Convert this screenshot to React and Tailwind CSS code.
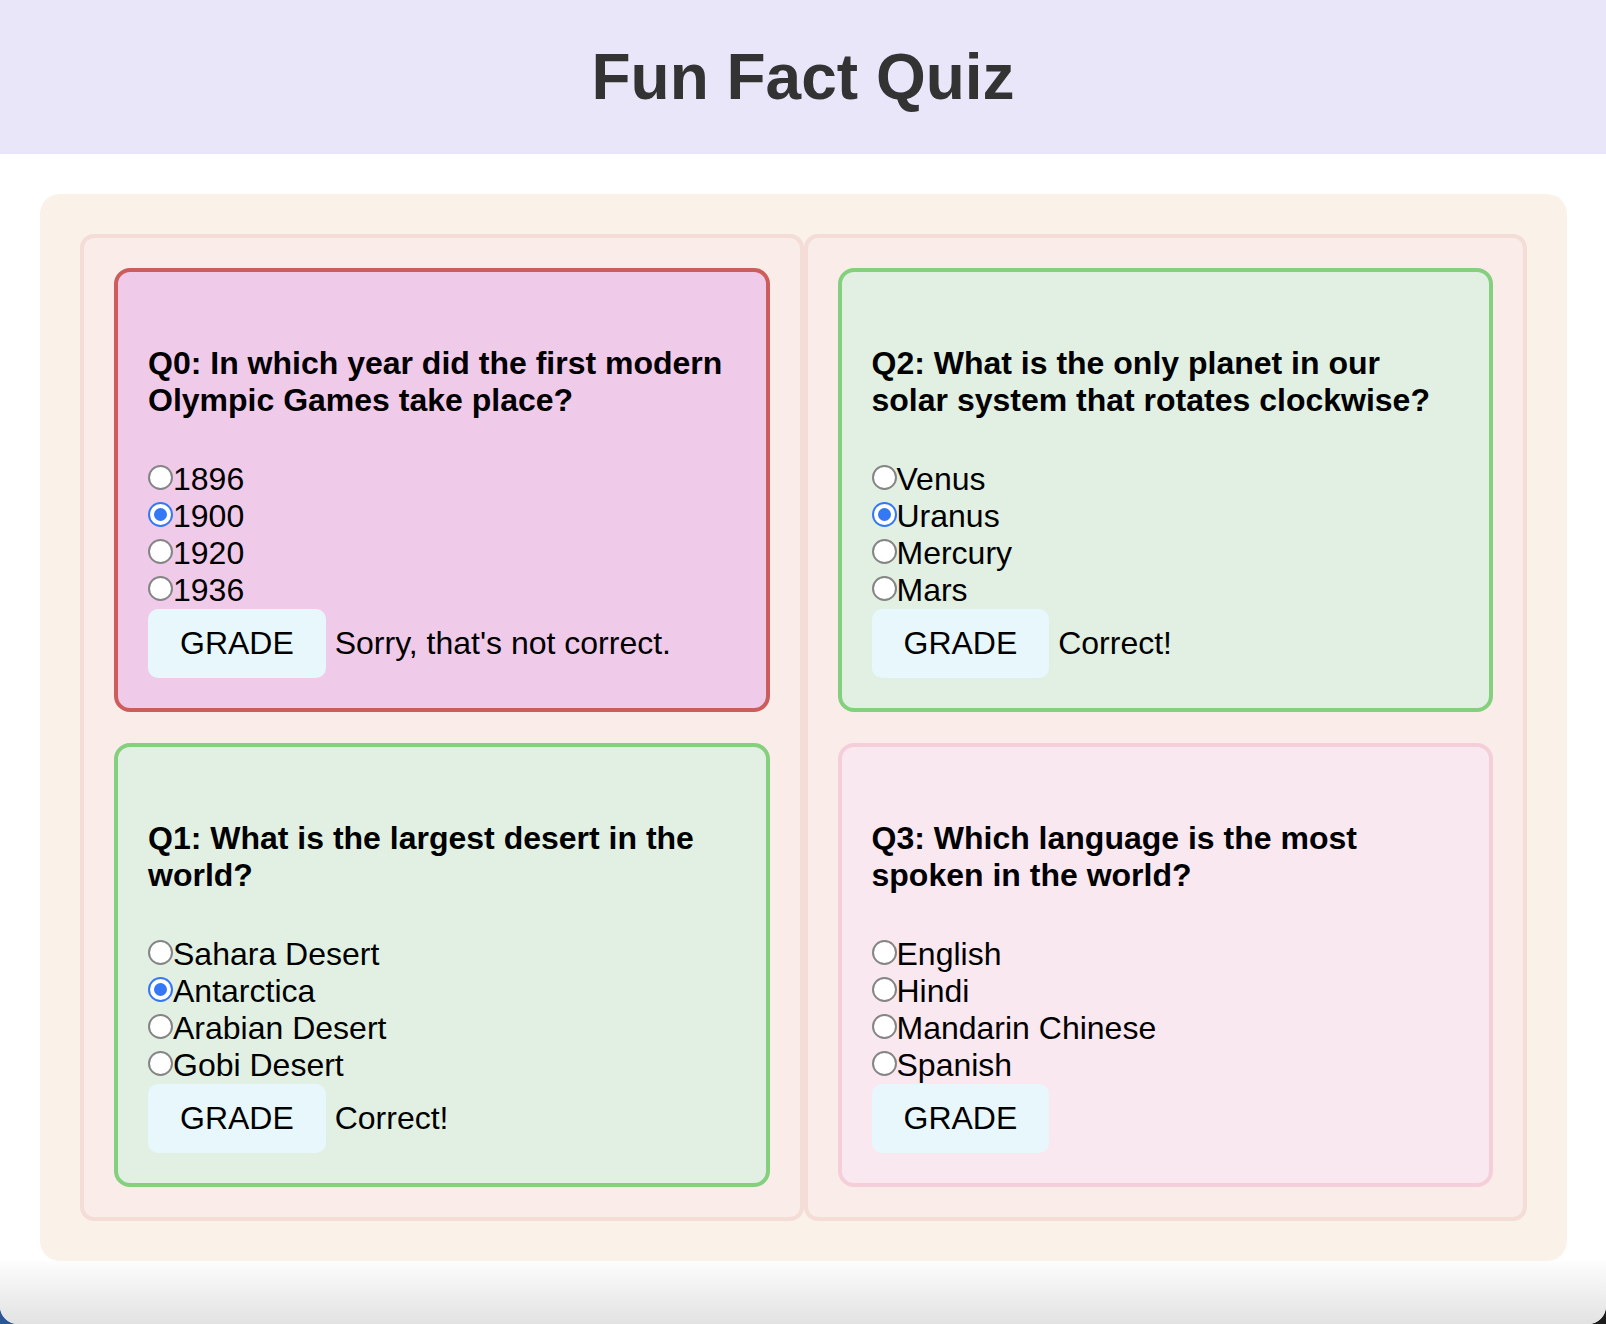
import { useState } from 'react'

const QUESTIONS = [
  {
    id: 0,
    text: 'In which year did the first modern Olympic Games take place?',
    options: ['1896', '1900', '1920', '1936'],
    answer: 0,
  },
  {
    id: 1,
    text: 'What is the largest desert in the world?',
    options: ['Sahara Desert', 'Antarctica', 'Arabian Desert', 'Gobi Desert'],
    answer: 1,
  },
  {
    id: 2,
    text: 'What is the only planet in our solar system that rotates clockwise?',
    options: ['Venus', 'Uranus', 'Mercury', 'Mars'],
    answer: 1,
  },
  {
    id: 3,
    text: 'Which language is the most spoken in the world?',
    options: ['English', 'Hindi', 'Mandarin Chinese', 'Spanish'],
    answer: 2,
  },
]

const cardStyles = {
  wrong: 'bg-[#F0CAE9] border-[#CD5C5C]',
  right: 'bg-[#E1F0E2] border-[#84D07F]',
  none: 'bg-[#F9E8F0] border-[#F4CFDA]',
}

function Radio({ checked }) {
  if (checked) {
    return (
      <span className="inline-block w-[25px] h-[25px] rounded-full bg-[#3478F6] p-[2px]">
        <span className="block w-full h-full rounded-full border-4 border-white bg-[#3478F6]" />
      </span>
    )
  }
  return <span className="inline-block w-[25px] h-[25px] rounded-full border-2 border-[#858585] bg-white" />
}

function QuestionCard({ q, picked, status, onPick, onGrade }) {
  return (
    <div className={`rounded-[16px] border-4 p-[30px] ${cardStyles[status || 'none']}`}>
      <h4 className="text-[32px] font-bold my-[1.33em] text-black">
        {`Q${q.id}: ${q.text}`}
      </h4>
      {q.options.map((opt, i) => (
        <div key={opt} className="cursor-pointer" onClick={() => onPick(i)}>
          <Radio checked={picked === i} />
          {opt}
        </div>
      ))}
      <button
        onClick={onGrade}
        className="inline-block px-[32px] py-[16px] rounded-[10px] bg-[#E8F7FC] cursor-pointer"
      >
        GRADE
      </button>
      {status === 'wrong' && " Sorry, that's not correct."}
      {status === 'right' && ' Correct!'}
    </div>
  )
}

export default function App() {
  const [picked, setPicked] = useState({ 0: 1, 1: 1, 2: 1, 3: null })
  const [status, setStatus] = useState({ 0: 'wrong', 1: 'right', 2: 'right', 3: null })

  const grade = (q) => {
    if (picked[q.id] == null) return
    setStatus({ ...status, [q.id]: picked[q.id] === q.answer ? 'right' : 'wrong' })
  }

  const card = (q) => (
    <QuestionCard
      key={q.id}
      q={q}
      picked={picked[q.id]}
      status={status[q.id]}
      onPick={(i) => setPicked({ ...picked, [q.id]: i })}
      onGrade={() => grade(q)}
    />
  )

  return (
    <div className="h-[1324px] bg-linear-to-r from-[#2b5797] to-[#1c1c1c]">
      <div className="flex flex-col h-full rounded-b-[18px] overflow-hidden bg-white text-black text-[32px] leading-[normal] font-['Liberation_Sans',Arial,sans-serif]">
        <header className="h-[154px] shrink-0 bg-[#E9E6FA] flex items-center justify-center">
          <h1 className="text-[64px] font-bold text-[#333]">Fun Fact Quiz</h1>
        </header>

        <main className="ml-[40px] mr-[39px] mt-[40px] p-[40px] rounded-[20px] bg-[#FAF2E9] grid grid-cols-2">
          <div className="flex flex-col gap-[31px] p-[30px] border-4 border-[#F3DDD6] bg-[#FAECE8] rounded-[14px]">
            {card(QUESTIONS[0])}
            {card(QUESTIONS[1])}
          </div>
          <div className="flex flex-col gap-[31px] p-[30px] border-4 border-[#F3DDD6] bg-[#FAECE8] rounded-[14px]">
            {card(QUESTIONS[2])}
            {card(QUESTIONS[3])}
          </div>
        </main>

        <div className="flex-1 bg-linear-to-b from-[#fdfdfd] to-[#e2e2e2]" />
      </div>
    </div>
  )
}
